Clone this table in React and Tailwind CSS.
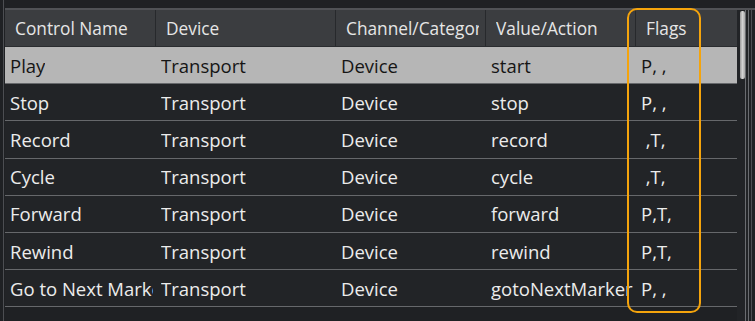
const COLUMNS = [
  { label: "Control Name", w: "w-[151px]" },
  { label: "Device", w: "w-[180px]" },
  { label: "Channel/Category", w: "w-[150px]" },
  { label: "Value/Action", w: "w-[150px]" },
  { label: "Flags", w: "flex-1" },
]

const ROWS = [
  ["Play", "Transport", "Device", "start", "P, ,"],
  ["Stop", "Transport", "Device", "stop", "P, ,"],
  ["Record", "Transport", "Device", "record", " ,T,"],
  ["Cycle", "Transport", "Device", "cycle", " ,T,"],
  ["Forward", "Transport", "Device", "forward", "P,T,"],
  ["Rewind", "Transport", "Device", "rewind", "P,T,"],
  ["Go to Next Marker", "Transport", "Device", "gotoNextMarker", "P, ,"],
]

export default function App() {
  return (
    <div
      className="relative w-[755px] h-[321px] overflow-hidden bg-[#1f2124] flex"
      style={{ fontFamily: '"Open Sans", "Noto Sans", sans-serif' }}
    >
      {/* left frame line */}
      <div className="w-[3px] shrink-0" />
      <div className="w-px shrink-0 bg-[#4c4e52]" />
      <div className="w-px shrink-0" />

      <div className="flex-1 flex flex-col min-w-0">
        <div className="h-[8px] shrink-0" />
        <div className="h-[2px] shrink-0 bg-[#505256]" />

        <div className="flex flex-1 min-h-0">
          {/* table */}
          <div className="w-[732px] flex flex-col">
            <div className="flex h-[36px] bg-[#3b3d40] text-[17.3px] text-[#e6e6e6]">
              {COLUMNS.map((c, i) => (
                <div
                  key={c.label}
                  className={`${c.w} flex items-center pl-[10px] pr-[6px] pt-[2px] whitespace-nowrap ${
                    i < COLUMNS.length - 1 ? "border-r border-[#27292c]" : ""
                  }`}
                >
                  <span className="block overflow-hidden">{c.label}</span>
                </div>
              ))}
            </div>
            <div className="h-px bg-[#2a2c2f]" />

            {ROWS.map((row, r) => (
              <div
                key={row[0]}
                className={`flex h-[37.2px] shrink-0 border-b border-[#66686b] text-[18.5px] ${
                  r === 0 ? "bg-[#b6b6b6] text-[#151515]" : "bg-[#222427] text-[#ececec]"
                }`}
              >
                {row.map((cell, i) => (
                  <div
                    key={i}
                    className={`${COLUMNS[i].w} flex items-center pl-[5px] pr-[3px] pt-[1px] whitespace-pre`}
                  >
                    <span className="block overflow-hidden">{cell}</span>
                  </div>
                ))}
              </div>
            ))}
          </div>

          {/* scrollbar */}
          <div className="w-[12px] flex bg-[#222427]">
            <div className="w-[3px]" />
            <div className="w-[5px] flex flex-col">
              <div className="h-[68px] mt-[1px] rounded-[2px] bg-gradient-to-r from-[#9a9a9a] via-[#d2d2d2] to-[#a8a8a8]" />
            </div>
            <div className="w-px bg-[#6a6c70]" />
            <div className="w-[2px]" />
            <div className="w-px bg-[#6a6c70]" />
          </div>
          <div className="w-[2px]" />
          <div className="w-px bg-[#4c4e52]" />
        </div>
      </div>

      {/* highlight around Flags column */}
      <div className="absolute left-[627px] top-[8px] w-[74px] h-[305px] rounded-[10px] border-2 border-[#f5a40c] pointer-events-none" />
    </div>
  )
}
